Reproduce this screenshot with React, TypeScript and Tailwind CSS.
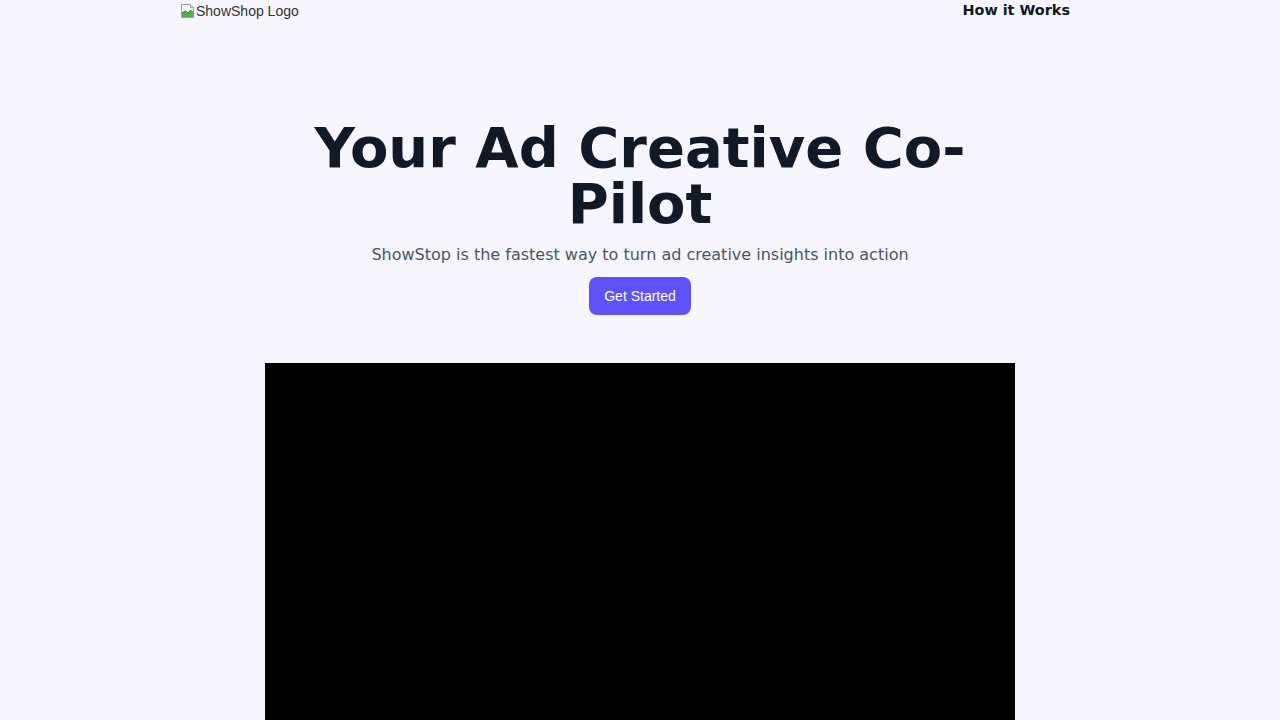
import * as React from "react"

const BrokenImage = () => (
  <svg width="16" height="16" viewBox="0 0 16 16" className="shrink-0">
    <path d="M1.5 1.5h9l3 3v10h-12z" fill="#f4f4f4" stroke="#9aa0a6" />
    <path d="M10.5 1.5v3h3" fill="#e0e0e0" stroke="#9aa0a6" />
    <path d="M2 14V10l3-2 3 2 3-3 2.5 2v5z" fill="#4caf50" />
    <path d="M2 10l3-2 3 2 3-3" fill="none" stroke="#2e7d32" />
  </svg>
)

export default function App() {
  return (
    <div className="min-h-screen bg-[#f7f5fe]" style={{ fontFamily: '"DejaVu Sans", sans-serif' }}>
      <header className="mx-auto flex h-[22px] max-w-[920px] items-center justify-between pr-[30px]">
        <span className="flex items-center text-[14px] text-[#333]" style={{ fontFamily: '"Liberation Sans", Arial, sans-serif' }}>
          <BrokenImage />
          ShowShop Logo
        </span>
        <a className="text-[14.4px] font-bold text-[#111827]">How it Works</a>
      </header>

      <section className="mx-auto flex max-w-[920px] flex-col items-center pt-[98px] text-center">
        <h1 className="max-w-[700px] text-[56px] font-bold leading-[56px] text-[#111827]">
          Your Ad Creative Co-Pilot
        </h1>
        <p className="mt-[11px] text-[16px] leading-[24px] text-[#4b5563]">
          ShowStop is the fastest way to turn ad creative insights into action
        </p>
        <button
          className="mt-[10px] h-[38px] rounded-lg bg-[#5d52fc] px-[15px] text-[14px] text-white"
          style={{ fontFamily: '"Liberation Sans", Arial, sans-serif' }}
        >
          Get Started
        </button>
        <div className="mt-[48px] h-[420px] w-[750px] bg-black" />
      </section>
    </div>
  )
}
